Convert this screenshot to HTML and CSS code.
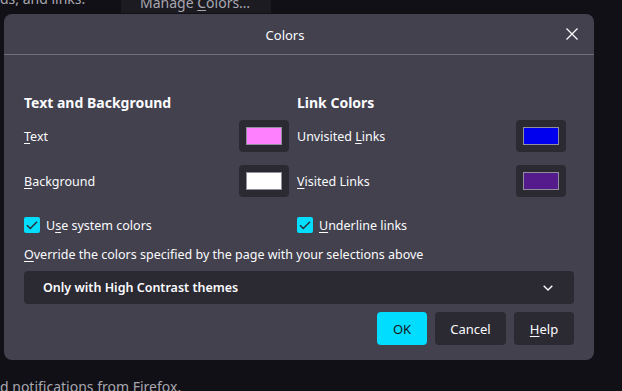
FILE: index.html
```html
<!DOCTYPE html>
<html>
<head>
<meta charset="utf-8">
<link rel="stylesheet" href="styles.css">
</head>
<body>
<div class="page">
  <div class="page-top">
    <span class="page-text">ds, and links.</span>
    <span class="page-button">Manage <u>C</u>olors…</span>
  </div>
  <div class="page-bottom">d notifications from Firefox.</div>
</div>

<div class="dialog">
  <div class="dialog-header">
    <span class="dialog-title">Colors</span>
    <svg class="close" width="12" height="12" viewBox="0 0 12 12"><path d="M0.5 0.5 L11.5 11.5 M11.5 0.5 L0.5 11.5" stroke="#fbfbfe" stroke-width="1.3" fill="none"/></svg>
  </div>
  <div class="dialog-body">
    <div class="columns">
      <div class="col col-left">
        <div class="heading">Text and Background</div>
        <div class="row">
          <span class="label"><u>T</u>ext</span>
          <span class="swatch-btn"><span class="swatch pink"></span></span>
        </div>
        <div class="row">
          <span class="label"><u>B</u>ackground</span>
          <span class="swatch-btn"><span class="swatch white"></span></span>
        </div>
        <div class="check-row">
          <span class="checkbox"><svg width="16" height="16" viewBox="0 0 16 16"><path d="M3 8.2 L6.3 11.5 L13 4.8" stroke="#2b2a33" stroke-width="1.4" fill="none"/></svg></span>
          <span class="label">U<u>s</u>e system colors</span>
        </div>
      </div>
      <div class="col col-right">
        <div class="heading">Link Colors</div>
        <div class="row">
          <span class="label">Unvisited <u>L</u>inks</span>
          <span class="swatch-btn"><span class="swatch blue"></span></span>
        </div>
        <div class="row">
          <span class="label"><u>V</u>isited Links</span>
          <span class="swatch-btn"><span class="swatch purple"></span></span>
        </div>
        <div class="check-row">
          <span class="checkbox"><svg width="16" height="16" viewBox="0 0 16 16"><path d="M3 8.2 L6.3 11.5 L13 4.8" stroke="#2b2a33" stroke-width="1.4" fill="none"/></svg></span>
          <span class="label"><u>U</u>nderline links</span>
        </div>
      </div>
    </div>
    <div class="override"><u>O</u>verride the colors specified by the page with your selections above</div>
    <div class="select">
      <span>Only with High Contrast themes</span>
      <svg width="10" height="6" viewBox="0 0 10 6"><path d="M0.7 0.7 L5 5 L9.3 0.7" stroke="#fbfbfe" stroke-width="1.4" fill="none"/></svg>
    </div>
    <div class="buttons">
      <span class="btn btn-primary">OK</span>
      <span class="btn btn-cancel">Cancel</span>
      <span class="btn btn-help"><u>H</u>elp</span>
    </div>
  </div>
</div>
</body>
</html>
```

FILE: styles.css
```css
* { box-sizing: border-box; }
html, body {
  margin: 0;
  padding: 0;
}
body {
  width: 622px;
  height: 391px;
  overflow: hidden;
  background: #111016;
  font-family: "Noto Sans", "Open Sans", sans-serif;
  color: #fbfbfe;
  position: relative;
}
u { text-decoration: underline; text-underline-offset: 2px; text-decoration-thickness: 1px; }

.page {
  height: 391px;
  display: flex;
  flex-direction: column;
  justify-content: space-between;
  color: #a8a7b0;
  font-size: 14px;
}
.page-top {
  display: flex;
  align-items: flex-end;
  height: 13px;
}
.page-text {
  line-height: 20px;
  margin-bottom: 4px;
  width: 121px;
}
.page-button {
  display: block;
  width: 150px;
  height: 20px;
  padding-left: 19px;
  line-height: 20px;
  background: #1c1b22;
}
.page-bottom {
  line-height: 18px;
  margin-bottom: -5px;
}

.dialog {
  position: absolute;
  left: 4px;
  top: 14px;
  width: 590px;
  height: 346px;
  background: #42414d;
  border-radius: 8px;
}
.dialog-header {
  height: 41px;
  border-bottom: 1px solid #6f6e78;
  display: flex;
  align-items: center;
  padding-right: 16px;
}
.dialog-title {
  flex: 1;
  text-align: center;
  font-size: 13px;
  margin-top: 1px;
}
.close {
  display: block;
  margin-top: -1px;
}
.dialog-body {
  padding: 38px 20px 0 20px;
  font-size: 12.5px;
}
.columns {
  display: flex;
  gap: 8px;
}
.col-left { width: 265px; }
.col-right { width: 269px; }
.heading {
  font-weight: 700;
  font-size: 14px;
  height: 20px;
  line-height: 20px;
  margin-bottom: 7px;
}
.row {
  display: flex;
  align-items: center;
  justify-content: space-between;
  height: 32px;
  margin-bottom: 13px;
}
.label { line-height: 18px; margin-top: 1px; }
.swatch-btn {
  display: block;
  width: 50px;
  height: 32px;
  padding: 7px;
  background: #2b2a33;
  border-radius: 4px;
}
.swatch {
  display: block;
  width: 36px;
  height: 18px;
  border: 1px solid #8f8f9d;
}
.pink { background: #ff80ff; }
.white { background: #ffffff; }
.blue { background: #0000ee; }
.purple { background: #551a8b; }

.check-row {
  display: flex;
  align-items: center;
  gap: 6px;
  height: 16px;
  margin-top: 20px;
}
.checkbox {
  display: block;
  width: 16px;
  height: 16px;
  background: #00ddff;
  border-radius: 2px;
}
.checkbox svg { display: block; }

.override {
  margin-top: 13px;
  line-height: 18px;
}
.select {
  margin-top: 7px;
  height: 33px;
  background: #2b2a33;
  border-radius: 4px;
  display: flex;
  align-items: center;
  justify-content: space-between;
  padding: 0 21px 0 19px;
  font-weight: 600;
}
.select svg { display: block; }
.buttons {
  margin-top: 8px;
  display: flex;
  justify-content: flex-end;
  gap: 8px;
}
.btn {
  display: flex;
  align-items: center;
  justify-content: center;
  height: 33px;
  border-radius: 4px;
  background: #2b2a33;
  font-size: 13px;
}
.btn-primary { width: 50px; background: #00ddff; color: #15141a; }
.btn-cancel { width: 71px; }
.btn-help { width: 60px; }
```
